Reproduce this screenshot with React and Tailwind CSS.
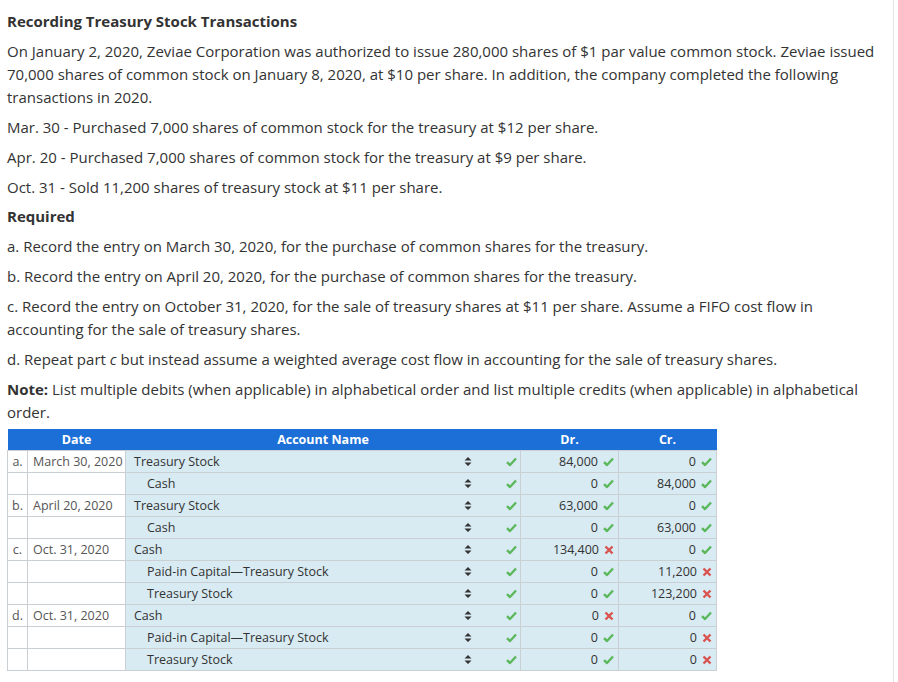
import React from 'react'

const rows = [
  { l: 'a.', d: 'March 30, 2020', acct: 'Treasury Stock', ind: false, dr: '84,000', drOk: true, cr: '0', crOk: true },
  { l: '', d: '', acct: 'Cash', ind: true, dr: '0', drOk: true, cr: '84,000', crOk: true },
  { l: 'b.', d: 'April 20, 2020', acct: 'Treasury Stock', ind: false, dr: '63,000', drOk: true, cr: '0', crOk: true },
  { l: '', d: '', acct: 'Cash', ind: true, dr: '0', drOk: true, cr: '63,000', crOk: true },
  { l: 'c.', d: 'Oct. 31, 2020', acct: 'Cash', ind: false, dr: '134,400', drOk: false, cr: '0', crOk: true },
  { l: '', d: '', acct: 'Paid-in Capital—Treasury Stock', ind: true, dr: '0', drOk: true, cr: '11,200', crOk: false },
  { l: '', d: '', acct: 'Treasury Stock', ind: true, dr: '0', drOk: true, cr: '123,200', crOk: false },
  { l: 'd.', d: 'Oct. 31, 2020', acct: 'Cash', ind: false, dr: '0', drOk: false, cr: '0', crOk: true },
  { l: '', d: '', acct: 'Paid-in Capital—Treasury Stock', ind: true, dr: '0', drOk: true, cr: '0', crOk: false },
  { l: '', d: '', acct: 'Treasury Stock', ind: true, dr: '0', drOk: true, cr: '0', crOk: false },
]

function Check() {
  return (
    <svg width="11" height="10" viewBox="0 0 11 10" className="inline-block">
      <path d="M1 5.2 L4 8 L10 1.5" fill="none" stroke="#5cb85c" strokeWidth="2.4" strokeLinejoin="round" />
    </svg>
  )
}

function Cross() {
  return (
    <svg width="10" height="10" viewBox="0 0 10 10" className="inline-block">
      <path d="M1.5 1.5 L8.5 8.5 M8.5 1.5 L1.5 8.5" fill="none" stroke="#d9534f" strokeWidth="2.4" />
    </svg>
  )
}

function Mark({ ok }) {
  return ok ? <Check /> : <Cross />
}

function Sort() {
  return (
    <svg width="8" height="11" viewBox="0 0 8 11" className="inline-block">
      <path d="M0.5 4.5 L4 1 L7.5 4.5 Z M0.5 6.5 L4 10 L7.5 6.5 Z" fill="#333" />
    </svg>
  )
}

export default function App() {
  return (
    <div className="relative min-h-[682px] w-[898px] bg-white text-[#333] font-['Open_Sans',sans-serif]">
      <div className="absolute right-[4px] top-0 h-[682px] w-px bg-[#e3e3e3]" />
      <div className="pl-[7px] pr-[20px] pt-[10px] text-[15px] leading-[23px]">
        <p className="font-bold">Recording Treasury Stock Transactions</p>
        <p className="mt-[7px]">
          On January 2, 2020, Zeviae Corporation was authorized to issue 280,000 shares of $1 par value common stock. Zeviae issued 70,000 shares of common stock on January 8, 2020, at $10 per share. In addition, the company completed the following transactions in 2020.
        </p>
        <p className="mt-[7px]">Mar. 30 - Purchased 7,000 shares of common stock for the treasury at $12 per share.</p>
        <p className="mt-[7px]">Apr. 20 - Purchased 7,000 shares of common stock for the treasury at $9 per share.</p>
        <p className="mt-[7px]">Oct. 31 - Sold 11,200 shares of treasury stock at $11 per share.</p>
        <p className="mt-[6px] font-bold">Required</p>
        <p className="mt-[7px]">a. Record the entry on March 30, 2020, for the purchase of common shares for the treasury.</p>
        <p className="mt-[7px]">b. Record the entry on April 20, 2020, for the purchase of common shares for the treasury.</p>
        <p className="mt-[7px]">
          c. Record the entry on October 31, 2020, for the sale of treasury shares at $11 per share. Assume a FIFO cost flow in accounting for the sale of treasury shares.
        </p>
        <p className="mt-[7px]">
          d. Repeat part <i>c</i> but instead assume a weighted average cost flow in accounting for the sale of treasury shares.
        </p>
        <p className="mt-[7px]">
          <b>Note:</b> List multiple debits (when applicable) in alphabetical order and list multiple credits (when applicable) in alphabetical order.
        </p>
      </div>

      <table className="ml-[7px] mt-[5px] border-collapse text-[12.5px] leading-[21px]">
        <thead>
          <tr className="bg-[#1b6fd6] text-white font-bold h-[21px]">
            <th className="w-[20px]"></th>
            <th className="w-[98px] text-center">Date</th>
            <th className="w-[395px] text-center">Account Name</th>
            <th className="w-[98px] text-center">Dr.</th>
            <th className="w-[98px] text-center">Cr.</th>
          </tr>
        </thead>
        <tbody>
          {rows.map((r, i) => (
            <tr key={i} className="h-[22px]">
              <td className="border border-[#c9cfd3] text-center text-[#555]">{r.l}</td>
              <td className="border border-[#c9cfd3] pl-[5px] text-[#555] whitespace-nowrap">{r.d}</td>
              <td className="border border-[#c9cfd3] bg-[#d8eaf2] p-0">
                <div className="flex items-center">
                  <span className={r.ind ? 'pl-[21px]' : 'pl-[8px]'}>{r.acct}</span>
                  <span className="ml-auto mr-[34px] flex items-center"><Sort /></span>
                  <span className="mr-[3px] flex items-center"><Check /></span>
                </div>
              </td>
              <td className="border border-[#c9cfd3] bg-[#d8eaf2] p-0">
                <div className="flex items-center justify-end pr-[4px] gap-[5px]">
                  <span>{r.dr}</span>
                  <Mark ok={r.drOk} />
                </div>
              </td>
              <td className="border border-[#c9cfd3] bg-[#d8eaf2] p-0">
                <div className="flex items-center justify-end pr-[4px] gap-[5px]">
                  <span>{r.cr}</span>
                  <Mark ok={r.crOk} />
                </div>
              </td>
            </tr>
          ))}
        </tbody>
      </table>
    </div>
  )
}
